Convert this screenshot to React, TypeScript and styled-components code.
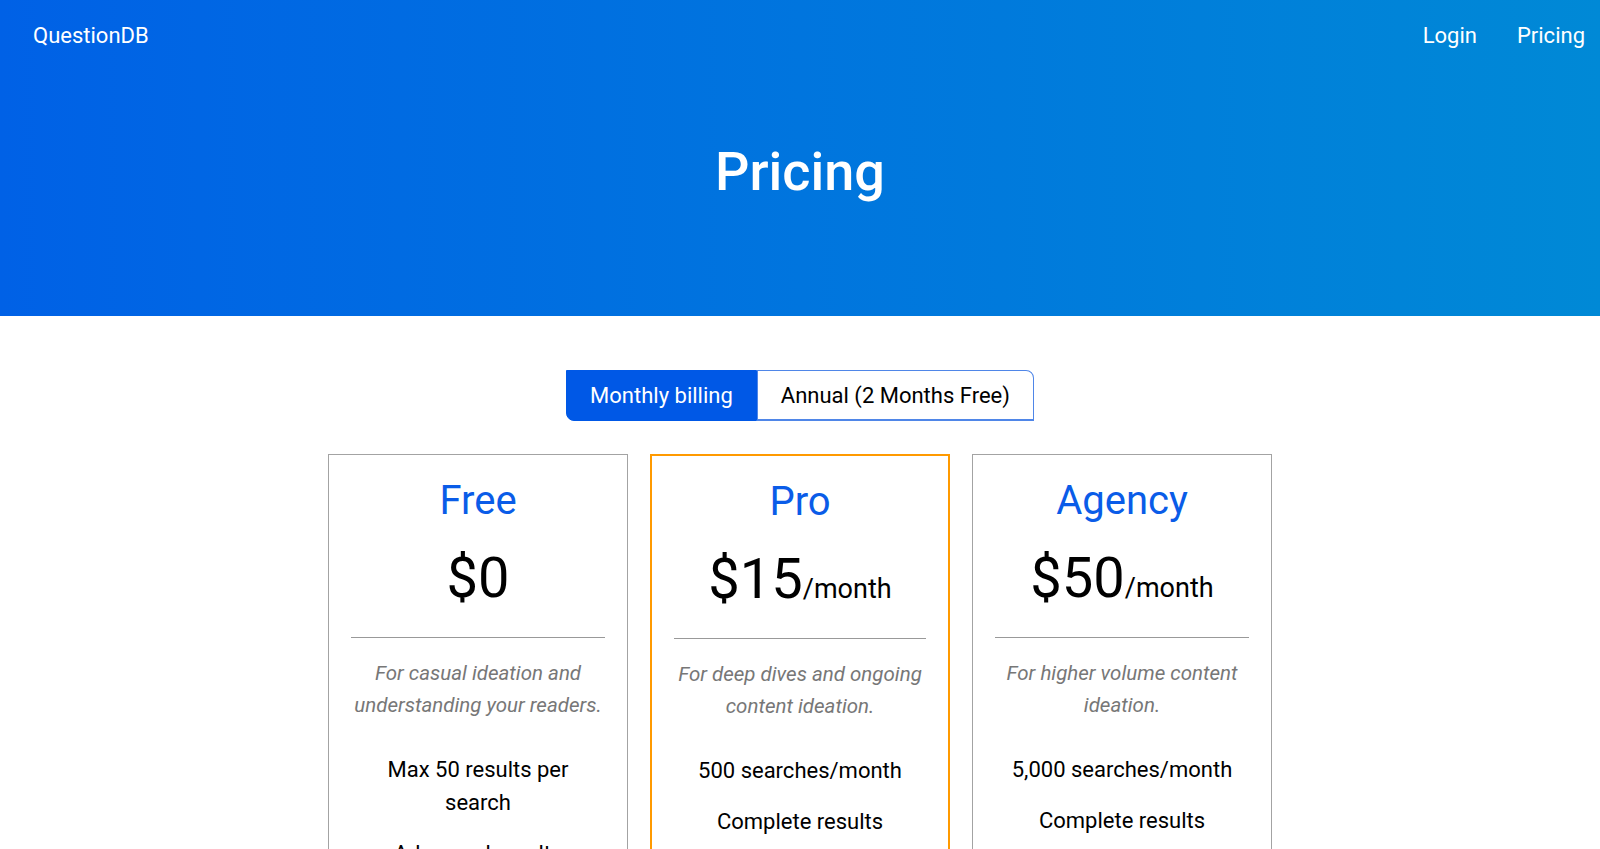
import { useState } from "react";
import styled, { createGlobalStyle } from "styled-components";

type Plan = {
  name: string;
  price: string;
  period?: string;
  blurb: string;
  features: string[];
  featured?: boolean;
};

const plans: Plan[] = [
  {
    name: "Free",
    price: "$0",
    blurb: "For casual ideation and understanding your readers.",
    features: ["Max 50 results per search", "Advanced results", "Community support"],
  },
  {
    name: "Pro",
    price: "$15",
    period: "/month",
    blurb: "For deep dives and ongoing content ideation.",
    features: ["500 searches/month", "Complete results", "Export to CSV"],
    featured: true,
  },
  {
    name: "Agency",
    price: "$50",
    period: "/month",
    blurb: "For higher volume content ideation.",
    features: ["5,000 searches/month", "Complete results", "Export to CSV"],
  },
];

const App: React.FC = () => {
  const [billing, setBilling] = useState<"monthly" | "annual">("monthly");

  return (
    <>
      <GlobalStyle />
      <Hero>
        <NavBar>
          <Brand>QuestionDB</Brand>
          <NavLinks>
            <NavLink href="#">Login</NavLink>
            <NavLink href="#">Pricing</NavLink>
          </NavLinks>
        </NavBar>
        <HeroTitle>Pricing</HeroTitle>
      </Hero>

      <Main>
        <Toggle>
          <ToggleButton
            $side="left"
            $active={billing === "monthly"}
            onClick={() => setBilling("monthly")}
          >
            Monthly billing
          </ToggleButton>
          <ToggleButton
            $side="right"
            $active={billing === "annual"}
            onClick={() => setBilling("annual")}
          >
            Annual (2 Months Free)
          </ToggleButton>
        </Toggle>

        <CardRow>
          {plans.map((plan) => (
            <Card key={plan.name} $featured={plan.featured}>
              <PlanName>{plan.name}</PlanName>
              <Price>
                {plan.price}
                {plan.period && <Period>{plan.period}</Period>}
              </Price>
              <Divider />
              <Blurb>{plan.blurb}</Blurb>
              <Features>
                {plan.features.map((f) => (
                  <Feature key={f}>{f}</Feature>
                ))}
              </Features>
            </Card>
          ))}
        </CardRow>
      </Main>
    </>
  );
};

const GlobalStyle = createGlobalStyle`
  * {
    box-sizing: border-box;
  }
  body {
    margin: 0;
    background: #fff;
    font-family: Roboto, "Liberation Sans", Arial, sans-serif;
    color: #000;
  }
`;

const Hero = styled.header`
  height: 316px;
  background: linear-gradient(to right, #0061e6, #0089d6);
  color: #fff;
`;

const NavBar = styled.nav`
  display: flex;
  justify-content: space-between;
  align-items: center;
  padding: 23px 15px 0 33px;
`;

const Brand = styled.div`
  font-size: 22px;
  line-height: 26px;
`;

const NavLinks = styled.div`
  display: flex;
  gap: 40px;
`;

const NavLink = styled.a`
  color: #fff;
  text-decoration: none;
  font-size: 22px;
  line-height: 26px;
`;

const HeroTitle = styled.h1`
  margin: 89px 0 0;
  text-align: center;
  font-size: 54px;
  font-weight: 500;
  line-height: 67px;
`;

const Main = styled.main`
  display: flex;
  flex-direction: column;
  align-items: center;
  padding-top: 54px;
`;

const Toggle = styled.div`
  display: flex;
`;

const ToggleButton = styled.button<{ $side: "left" | "right"; $active: boolean }>`
  height: 51px;
  padding: 0 23px;
  font-family: inherit;
  font-size: 22px;
  cursor: pointer;
  background: ${(p) => (p.$active ? "#0058e6" : "#fff")};
  color: ${(p) => (p.$active ? "#fff" : "#000")};
  border: 1px solid ${(p) => (p.$active ? "#0058e6" : "#4f86e8")};
  border-bottom-width: ${(p) => (p.$active ? "1px" : "2px")};
  border-radius: ${(p) => (p.$side === "left" ? "0 0 0 8px" : "0 8px 0 0")};
`;

const CardRow = styled.div`
  display: flex;
  gap: 22px;
  margin-top: 33px;
`;

const Card = styled.div<{ $featured?: boolean }>`
  width: 300px;
  padding: 22px 22px 40px;
  border: ${(p) => (p.$featured ? "2px solid #ff9a00" : "1px solid #a3a3a3")};
  text-align: center;
`;

const PlanName = styled.h2`
  margin: 0;
  font-size: 40px;
  font-weight: 400;
  line-height: 48px;
  color: #0a5ce8;
`;

const Price = styled.div`
  margin-top: 18px;
  height: 70px;
  font-size: 56px;
  line-height: 70px;
`;

const Period = styled.span`
  font-size: 27px;
  line-height: 1;
`;

const Divider = styled.hr`
  margin: 24px 0 0;
  border: none;
  border-top: 1px solid #999;
`;

const Blurb = styled.p`
  margin: 19px 0 0;
  font-size: 20.5px;
  line-height: 32px;
  font-style: italic;
  color: #777;
`;

const Features = styled.ul`
  list-style: none;
  margin: 32px 0 0;
  padding: 0 10px;
  display: flex;
  flex-direction: column;
  gap: 18px;
`;

const Feature = styled.li`
  font-size: 22px;
  line-height: 33px;
`;

export default App;
